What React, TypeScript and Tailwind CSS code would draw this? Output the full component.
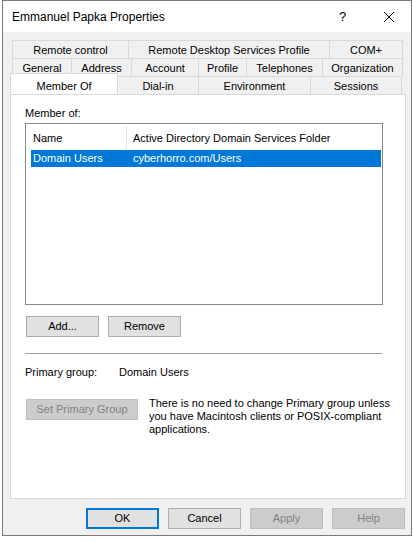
/**
 * Properties dialog
 * Windows style user properties sheet, Member Of tab
 */

const font = { fontFamily: '"Liberation Sans", Arial, sans-serif' };

type Tab = { label: string; w: string };

const row1: Tab[] = [
  { label: 'Remote control', w: 'w-[117px]' },
  { label: 'Remote Desktop Services Profile', w: 'w-[202px]' },
  { label: 'COM+', w: 'w-[74px]' },
];

const row2: Tab[] = [
  { label: 'General', w: 'w-[60px]' },
  { label: 'Address', w: 'w-[61px]' },
  { label: 'Account', w: 'w-[68px]' },
  { label: 'Profile', w: 'w-[49px]' },
  { label: 'Telephones', w: 'w-[77px]' },
  { label: 'Organization', w: 'w-[81px]' },
];

const row3: Tab[] = [
  { label: 'Dial-in', w: 'w-[82px]' },
  { label: 'Environment', w: 'w-[113px]' },
  { label: 'Sessions', w: 'w-[92px]' },
];

function TabCell({ tab, first }: { tab: Tab; first: boolean }) {
  return (
    <div
      className={`${tab.w} ${first ? '' : '-ml-px'} h-[18px] border border-b-0 border-[#d9d9d9] bg-[#f0f0f0] flex items-center justify-center pt-[2px] text-[11px] text-black`}
    >
      {tab.label}
    </div>
  );
}

function Button({
  children,
  className = '',
  disabled = false,
  primary = false,
}: {
  children: React.ReactNode;
  className?: string;
  disabled?: boolean;
  primary?: boolean;
}) {
  const base = disabled
    ? 'bg-[#cccccc] border border-[#bfbfbf] text-[#838383]'
    : primary
    ? 'bg-[#e1e1e1] border-2 border-[#0078d7] text-black'
    : 'bg-[#e1e1e1] border border-[#adadad] text-black';
  return (
    <div className={`${base} h-[21px] flex items-center justify-center text-[11px] ${className}`}>
      {children}
    </div>
  );
}

export default function App() {
  return (
    <div className="w-[413px] h-[541px] bg-white overflow-hidden relative" style={font}>
      {/* Window */}
      <div className="ml-[2px] w-[410px] h-[536px] border border-[#7a7a7a] bg-[#f0f0f0] flex flex-col">
        {/* Title bar */}
        <div className="h-[31px] bg-white flex items-center pl-[9px] shrink-0">
          <span className="text-[12px] text-black flex-1">Emmanuel Papka Properties</span>
          <span className="text-[13px] text-black w-[16px] mr-[28px]">?</span>
          <svg width="12" height="12" viewBox="0 0 12 12" className="mr-[16px]">
            <path d="M1 1 L11 11 M11 1 L1 11" stroke="#000" strokeWidth="1" />
          </svg>
        </div>

        {/* Tabs */}
        <div className="pl-[8px] pt-[8px]">
          <div className="pl-[1px]">
            <div className="flex h-[18px]">
              {row1.map((t, i) => <TabCell key={t.label} tab={t} first={i === 0} />)}
            </div>
            <div className="flex h-[18px]">
              {row2.map((t, i) => <TabCell key={t.label} tab={t} first={i === 0} />)}
            </div>
          </div>
          <div className="flex h-[18px] pl-[1px] items-end">
            <div className="w-[108px] -ml-[2px] h-[21px] -mt-[3px] bg-white border border-b-0 border-[#d9d9d9] relative z-10 flex items-start justify-center pt-[4px] text-[11px] text-black">
              Member Of
            </div>
            <div className="flex -ml-px">
              {row3.map((t, i) => <TabCell key={t.label} tab={t} first={i === 0} />)}
            </div>
          </div>

          {/* Panel */}
          <div className="w-[396px] h-[405px] -ml-px bg-white border border-[#d9d9d9] pl-[14px] pt-[12px] text-[11px] text-black">
            <div className="h-[13px] leading-[13px]">Member of:</div>
            <div className="mt-[3px] w-[358px] h-[182px] border border-[#828790] bg-white pl-[5px] pr-[1px] pt-[2px]">
              <div className="flex h-[24px] items-center">
                <div className="w-[96px] pl-[2px] border-r border-[#e5e5e5] h-full flex items-center">Name</div>
                <div className="pl-[6px]">Active Directory Domain Services Folder</div>
              </div>
              <div className="flex h-[17px] items-center bg-[#0078d7] text-white">
                <div className="w-[96px] pl-[2px]">Domain Users</div>
                <div className="pl-[6px]">cyberhorro.com/Users</div>
              </div>
            </div>

            <div className="flex gap-[9px] mt-[11px] pl-[1px]">
              <Button className="w-[73px]">Add...</Button>
              <Button className="w-[73px]">Remove</Button>
            </div>

            <div className="mt-[16px] w-[357px] h-px bg-[#a0a0a0]" />

            <div className="flex mt-[12px] h-[13px] items-center">
              <div className="w-[94px]">Primary group:</div>
              <div>Domain Users</div>
            </div>

            <div className="flex mt-[19px] pl-[1px] items-start">
              <Button disabled className="w-[112px] mt-[1px]">Set Primary Group</Button>
              <div className="ml-[11px] leading-[13px] -mt-[1px] w-[250px] whitespace-nowrap">
                There is no need to change Primary group unless
                <br />
                you have Macintosh clients or POSIX-compliant
                <br />
                applications.
              </div>
            </div>
          </div>
        </div>

        {/* Footer buttons */}
        <div className="flex justify-end gap-[9px] pr-[6px] mt-[9px]">
          <Button primary className="w-[73px]">OK</Button>
          <Button className="w-[73px]">Cancel</Button>
          <Button disabled className="w-[73px]">Apply</Button>
          <Button disabled className="w-[73px]">Help</Button>
        </div>
      </div>
    </div>
  );
}
